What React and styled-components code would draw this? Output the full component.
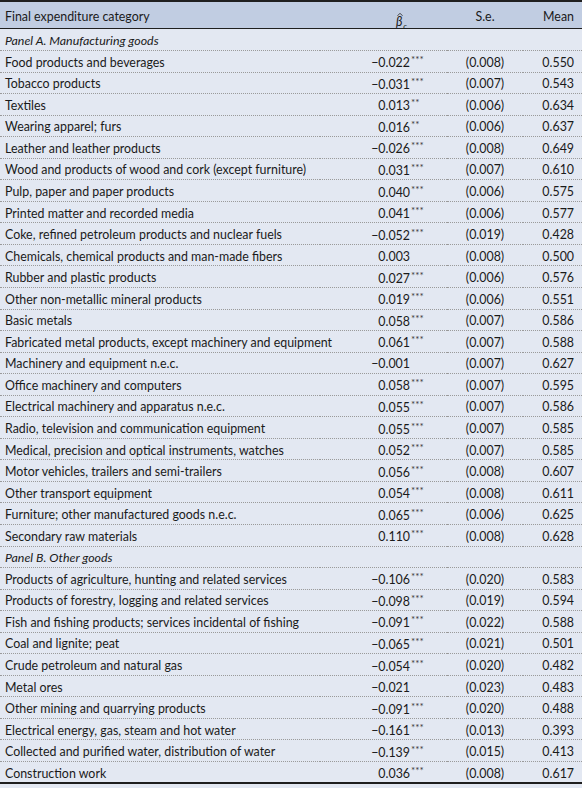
import React from 'react';
import styled, { createGlobalStyle } from 'styled-components';

const GlobalStyle = createGlobalStyle`
    html, body {
        margin: 0;
        padding: 0;
        background: #e3e8f2;
    }
`;

const Table = styled.table`
    width: 582px;
    border-collapse: collapse;
    table-layout: fixed;
    font-family: Lato, "Liberation Sans", sans-serif;
    font-size: 12.4px;
    color: #1a1a1a;
    background: #e3e8f2;
    border-top: 2px solid #1f1f1f;
    border-bottom: 2px solid #1f1f1f;
`;

const HeadRow = styled.tr`
    background: #c1cde2;
    height: 27px;
    border-bottom: 1px solid #1f1f1f;
`;

const Row = styled.tr`
    height: 21.55px;
    border-bottom: ${p => (p.$last ? 'none' : '1px dotted #9a9a9a')};
`;

const Cell = styled.td`
    padding: 2px 0 0 5px;
    white-space: nowrap;
    vertical-align: middle;
    font-style: ${p => (p.$panel ? 'italic' : 'normal')};
`;

const HeadCell = styled.th`
    font-weight: normal;
    padding: 2px 0 0 0;
    text-align: ${p => p.$align || 'left'};
    padding-left: ${p => (p.$align ? '0' : '5px')};
    padding-right: ${p => p.$pr || '0'};
`;

const BetaCell = styled.td`
    text-align: right;
    padding: 2px 20px 0 0;
    white-space: nowrap;
`;

const Stars = styled.span`
    display: inline-block;
    width: 17px;
    text-align: left;
    font-size: 10px;
    vertical-align: 4px;
    line-height: 1;
    color: #3a3a3a;
    padding-left: 1px;
    box-sizing: border-box;
`;

const SeCell = styled.td`
    text-align: center;
    padding: 2px 0 0 0;
`;

const MeanCell = styled.td`
    text-align: right;
    padding: 2px 8px 0 0;
`;

const Beta = styled.span`
    display: inline-flex;
    align-items: flex-end;
    font-style: italic;
`;

const HatGlyph = styled.span`
    display: inline-flex;
    flex-direction: column;
    align-items: center;
    line-height: 1;
`;

const Hat = styled.svg`
    width: 6px;
    height: 3px;
    margin-bottom: 0;
    margin-left: 2px;
    overflow: visible;
`;

const Sub = styled.span`
    font-size: 8.5px;
    line-height: 1;
    margin-bottom: -2px;
`;

const rows = [
    { panel: 'Panel A. Manufacturing goods' },
    ['Food products and beverages', '\u22120.022', '***', '(0.008)', '0.550'],
    ['Tobacco products', '\u22120.031', '***', '(0.007)', '0.543'],
    ['Textiles', '0.013', '**', '(0.006)', '0.634'],
    ['Wearing apparel; furs', '0.016', '**', '(0.006)', '0.637'],
    ['Leather and leather products', '\u22120.026', '***', '(0.008)', '0.649'],
    ['Wood and products of wood and cork (except furniture)', '0.031', '***', '(0.007)', '0.610'],
    ['Pulp, paper and paper products', '0.040', '***', '(0.006)', '0.575'],
    ['Printed matter and recorded media', '0.041', '***', '(0.006)', '0.577'],
    ['Coke, refined petroleum products and nuclear fuels', '\u22120.052', '***', '(0.019)', '0.428'],
    ['Chemicals, chemical products and man-made fibers', '0.003', '', '(0.008)', '0.500'],
    ['Rubber and plastic products', '0.027', '***', '(0.006)', '0.576'],
    ['Other non-metallic mineral products', '0.019', '***', '(0.006)', '0.551'],
    ['Basic metals', '0.058', '***', '(0.007)', '0.586'],
    ['Fabricated metal products, except machinery and equipment', '0.061', '***', '(0.007)', '0.588'],
    ['Machinery and equipment n.e.c.', '\u22120.001', '', '(0.007)', '0.627'],
    ['Office machinery and computers', '0.058', '***', '(0.007)', '0.595'],
    ['Electrical machinery and apparatus n.e.c.', '0.055', '***', '(0.007)', '0.586'],
    ['Radio, television and communication equipment', '0.055', '***', '(0.007)', '0.585'],
    ['Medical, precision and optical instruments, watches', '0.052', '***', '(0.007)', '0.585'],
    ['Motor vehicles, trailers and semi-trailers', '0.056', '***', '(0.008)', '0.607'],
    ['Other transport equipment', '0.054', '***', '(0.008)', '0.611'],
    ['Furniture; other manufactured goods n.e.c.', '0.065', '***', '(0.006)', '0.625'],
    ['Secondary raw materials', '0.110', '***', '(0.008)', '0.628'],
    { panel: 'Panel B. Other goods' },
    ['Products of agriculture, hunting and related services', '\u22120.106', '***', '(0.020)', '0.583'],
    ['Products of forestry, logging and related services', '\u22120.098', '***', '(0.019)', '0.594'],
    ['Fish and fishing products; services incidental of fishing', '\u22120.091', '***', '(0.022)', '0.588'],
    ['Coal and lignite; peat', '\u22120.065', '***', '(0.021)', '0.501'],
    ['Crude petroleum and natural gas', '\u22120.054', '***', '(0.020)', '0.482'],
    ['Metal ores', '\u22120.021', '', '(0.023)', '0.483'],
    ['Other mining and quarrying products', '\u22120.091', '***', '(0.020)', '0.488'],
    ['Electrical energy, gas, steam and hot water', '\u22120.161', '***', '(0.013)', '0.393'],
    ['Collected and purified water, distribution of water', '\u22120.139', '***', '(0.015)', '0.413'],
    ['Construction work', '0.036', '***', '(0.008)', '0.617'],
];

export default function App() {
    return <>
        <GlobalStyle />
        <Table>
            <colgroup>
                <col style={{ width: 320 }} />
                <col style={{ width: 127 }} />
                <col style={{ width: 76 }} />
                <col style={{ width: 59 }} />
            </colgroup>
            <thead>
                <HeadRow>
                    <HeadCell>Final expenditure category</HeadCell>
                    <HeadCell $align="right" $pr="40px">
                        <Beta>
                            <HatGlyph>
                                <Hat viewBox="0 0 6 3">
                                    <path d="M0.5 2.8 L3 0.3 L5.5 2.8" fill="none" stroke="#1a1a1a" strokeWidth="0.8" />
                                </Hat>
                                <span>{'\u03B2'}</span>
                            </HatGlyph>
                            <Sub>c</Sub>
                        </Beta>
                    </HeadCell>
                    <HeadCell $align="center">S.e.</HeadCell>
                    <HeadCell $align="right" $pr="8px">Mean</HeadCell>
                </HeadRow>
            </thead>
            <tbody>
                { rows.map((r, i) => r.panel
                    ? <Row key={ i }><Cell $panel colSpan={ 4 }>{ r.panel }</Cell></Row>
                    : <Row key={ i } $last={ i === rows.length - 1 }>
                        <Cell>{ r[0] }</Cell>
                        <BetaCell>{ r[1] }<Stars>{ r[2] }</Stars></BetaCell>
                        <SeCell>{ r[3] }</SeCell>
                        <MeanCell>{ r[4] }</MeanCell>
                    </Row>
                ) }
            </tbody>
        </Table>
    </>;
}
